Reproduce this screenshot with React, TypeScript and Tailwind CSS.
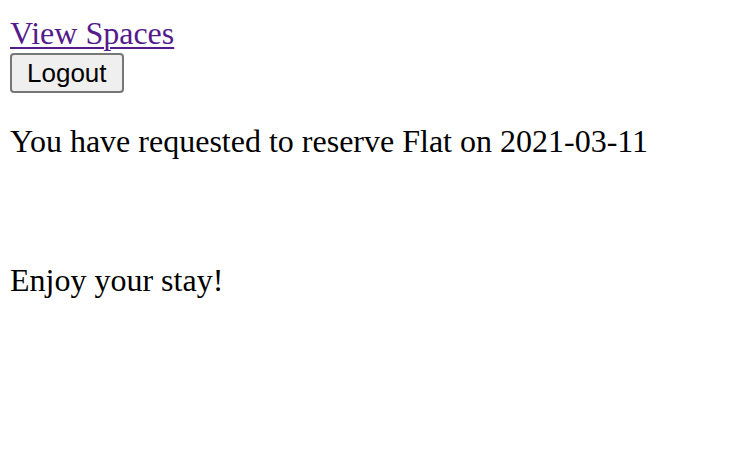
export default function App() {
  return (
    <div className="min-h-[466px] bg-white pl-[10px] pt-[16px] font-['Liberation_Serif',serif] text-[32px] text-black">
      {/* Nav */}
      <a href="#" className="block h-[34px] w-fit leading-[34px] text-[#551a8b] underline decoration-[2px] underline-offset-[3px]">
        View Spaces
      </a>
      <button className="mt-[3px] flex h-[40px] items-center rounded-[4px] border-2 border-[#767676] bg-[#efefef] px-[15px] font-['Liberation_Sans',sans-serif] text-[26px] leading-none text-black">
        Logout
      </button>

      {/* Reservation */}
      <p className="mt-[31px] leading-[34px]">You have requested to reserve Flat on 2021-03-11</p>
      <p className="mt-[105px] leading-[34px]">Enjoy your stay!</p>
    </div>
  );
}
